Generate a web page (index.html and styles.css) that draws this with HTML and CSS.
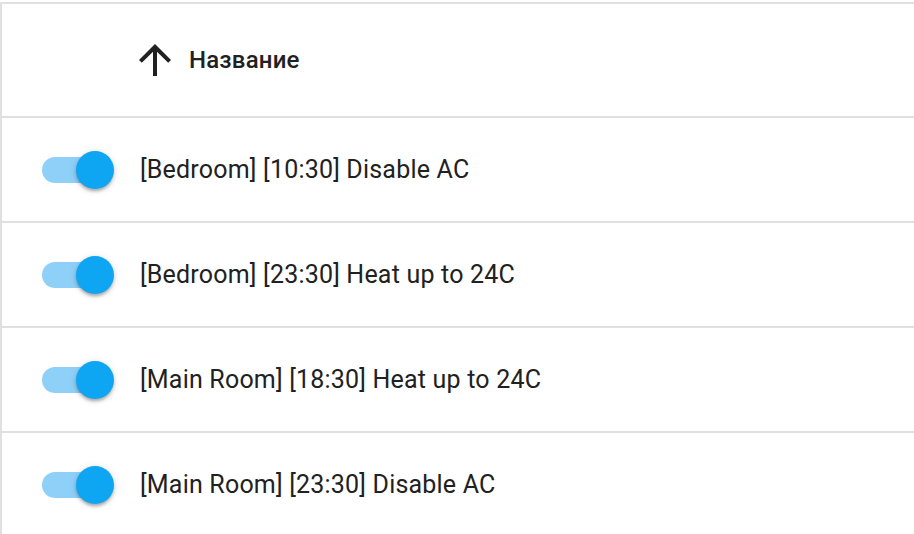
FILE: index.html
```html
<!DOCTYPE html>
<html>
<head>
<meta charset="utf-8">
<link rel="stylesheet" href="styles.css">
</head>
<body>
<div class="table">
  <div class="header">
    <div class="sort-cell">
      <svg class="arrow" viewBox="0 0 24 24" width="48" height="48"><path d="M4 12l1.41 1.41L11 7.83V20h2V7.83l5.58 5.59L20 12l-8-8-8 8z" fill="#212121"/></svg>
      <span class="title">Название</span>
    </div>
  </div>
  <div class="row">
    <div class="switch"><div class="track"></div><div class="thumb"></div></div>
    <span class="name">[Bedroom] [10:30] Disable AC</span>
  </div>
  <div class="row">
    <div class="switch"><div class="track"></div><div class="thumb"></div></div>
    <span class="name">[Bedroom] [23:30] Heat up to 24C</span>
  </div>
  <div class="row">
    <div class="switch"><div class="track"></div><div class="thumb"></div></div>
    <span class="name">[Main Room] [18:30] Heat up to 24C</span>
  </div>
  <div class="row">
    <div class="switch"><div class="track"></div><div class="thumb"></div></div>
    <span class="name">[Main Room] [23:30] Disable AC</span>
  </div>
</div>
</body>
</html>
```
FILE: styles.css
```css
html, body {
  margin: 0;
  padding: 0;
  background: #ffffff;
  font-family: Roboto, "Liberation Sans", sans-serif;
  color: #212121;
}
.table {
  margin-top: 2px;
  border-top: 2px solid #e0e0e0;
  border-left: 2px solid #e0e0e0;
  width: 912px;
}
.header {
  height: 112px;
  border-bottom: 2px solid #e0e0e0;
  display: flex;
  align-items: center;
  padding-left: 129px;
}
.sort-cell {
  display: flex;
  align-items: center;
  gap: 10px;
}
.arrow {
  display: block;
}
.title {
  font-size: 24px;
  font-weight: 500;
  letter-spacing: 0.2px;
}
.row {
  height: 103px;
  border-bottom: 2px solid #e0e0e0;
  display: flex;
  align-items: center;
  padding-left: 40px;
}
.row:last-child {
  border-bottom: none;
}
.switch {
  position: relative;
  width: 74px;
  height: 40px;
  margin-right: 24px;
  flex: none;
}
.track {
  position: absolute;
  left: 0;
  top: 7px;
  width: 66px;
  height: 26px;
  border-radius: 13px;
  background: #8fd0f9;
}
.thumb {
  position: absolute;
  right: 2px;
  top: 1px;
  width: 38px;
  height: 38px;
  border-radius: 50%;
  background: #0ea5f2;
  box-shadow: 0 3px 3px -1px rgba(0,0,0,0.2), 0 2px 4px rgba(0,0,0,0.14), 0 1px 8px rgba(0,0,0,0.1);
}
.name {
  font-size: 25px;
  letter-spacing: 0.2px;
}
```
